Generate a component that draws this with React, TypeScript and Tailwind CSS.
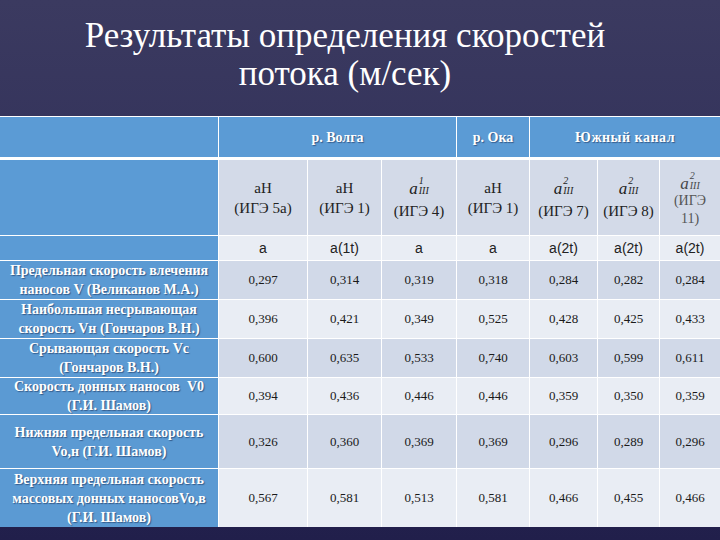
import React from "react";

const serif = "[font-family:'Liberation_Serif','Times_New_Roman',serif]";
const sans = "[font-family:'Liberation_Sans',Arial,sans-serif]";

function AIII({ sup }: { sup: string }) {
  return (
    <span className="inline-flex items-start italic text-[#222]">
      <span className="text-[17px] leading-[20px] mt-[4px]">a</span>
      <span className="inline-flex flex-col text-[10px] leading-[10px] ml-[1px] mt-[1px]">
        <span>{sup}</span>
        <span>III</span>
      </span>
    </span>
  );
}

const labels: string[][] = [
  ["Предельная скорость влечения", "наносов V (Великанов М.А.)"],
  ["Наибольшая несрывающая", "скорость Vн (Гончаров В.Н.)"],
  ["Срывающая скорость Vc", "(Гончаров В.Н.)"],
  ["Скорость донных наносов  V0", "(Г.И. Шамов)"],
  ["Нижняя предельная скорость", "Vo,н (Г.И. Шамов)"],
  ["Верхняя предельная скорость", "массовых донных наносовVo,в", "(Г.И. Шамов)"],
];

const data: string[][] = [
  ["0,297", "0,314", "0,319", "0,318", "0,284", "0,282", "0,284"],
  ["0,396", "0,421", "0,349", "0,525", "0,428", "0,425", "0,433"],
  ["0,600", "0,635", "0,533", "0,740", "0,603", "0,599", "0,611"],
  ["0,394", "0,436", "0,446", "0,446", "0,359", "0,350", "0,359"],
  ["0,326", "0,360", "0,369", "0,369", "0,296", "0,289", "0,296"],
  ["0,567", "0,581", "0,513", "0,581", "0,466", "0,455", "0,466"],
];

const units = ["a", "a(1t)", "a", "a", "a(2t)", "a(2t)", "a(2t)"];

const shadow = "[text-shadow:1px_1px_1px_rgba(20,40,80,0.55)]";

export default function App() {
  return (
    <div className={`w-[720px] h-[540px] overflow-hidden bg-gradient-to-b from-[#3b3a60] via-[#302f59] to-[#211f4b] ${serif}`}>
      <div className="h-[116px] pt-[17px] pr-[30px] text-center text-white text-[35px] leading-[38px]">
        <div>Результаты определения скоростей</div>
        <div>потока (м/сек)</div>
      </div>
      <div className="grid grid-cols-[218px_88px_73px_74px_72px_67px_61px_60px] grid-rows-[42px_75px_24px_38px_38px_38px_36px_53px_58px] gap-px bg-white border-t border-white">
        {/* header row 1 */}
        <div className="bg-[#5b9bd5] mb-[2px]" />
        <div className={`col-span-3 bg-[#5b9bd5] mb-[2px] flex items-center justify-center text-white font-bold text-[14px] ${shadow}`}>
          р. Волга
        </div>
        <div className={`bg-[#5b9bd5] mb-[2px] flex items-center justify-center text-white font-bold text-[14px] ${shadow}`}>
          р. Ока
        </div>
        <div className={`col-span-3 bg-[#5b9bd5] mb-[2px] flex items-center justify-center text-white font-bold text-[14px] tracking-[0.5px] ${shadow}`}>
          Южный канал
        </div>

        {/* header row 2 */}
        <div className="bg-[#5b9bd5]" />
        {[
          { m: null, t: "(ИГЭ 5a)" },
          { m: null, t: "(ИГЭ 1)" },
          { m: "1", t: "(ИГЭ 4)" },
          { m: null, t: "(ИГЭ 1)" },
          { m: "2", t: "(ИГЭ 7)" },
          { m: "2", t: "(ИГЭ 8)" },
        ].map((c, i) => (
          <div key={i} className="bg-[#d3dae8] flex flex-col items-center justify-center text-[15px] leading-[20px] text-[#222]">
            {c.m ? (
              <div className="h-[26px] flex items-start">
                <AIII sup={c.m} />
              </div>
            ) : (
              <div>aH</div>
            )}
            <div className="whitespace-nowrap">{c.t}</div>
          </div>
        ))}
        <div className="bg-[#d3dae8] flex flex-col items-center justify-center text-[14px] leading-[18px] text-[#555] pt-[2px]">
          <div className="h-[22px] flex items-start opacity-80">
            <AIII sup="2" />
          </div>
          <div>(ИГЭ</div>
          <div>11)</div>
        </div>

        {/* header row 3 */}
        <div className="bg-[#5b9bd5]" />
        {units.map((u, i) => (
          <div key={i} className={`bg-[#e9edf4] flex items-center justify-center ${sans} text-[14px] text-[#222]`}>
            {u}
          </div>
        ))}

        {/* data rows */}
        {data.map((row, r) => (
          <React.Fragment key={r}>
            <div className={`bg-[#5b9ad3] flex flex-col items-center justify-center text-white font-bold text-[14px] leading-[19px] whitespace-pre ${shadow}`}>
              {labels[r].map((l, j) => (
                <div key={j}>{l}</div>
              ))}
            </div>
            {row.map((v, c) => (
              <div
                key={c}
                className={`${r % 2 === 0 ? "bg-[#d1d9e8]" : "bg-[#e9edf4]"} flex items-center justify-center text-[13px] text-[#1a1a1a]`}
              >
                {v}
              </div>
            ))}
          </React.Fragment>
        ))}
      </div>
    </div>
  );
}
